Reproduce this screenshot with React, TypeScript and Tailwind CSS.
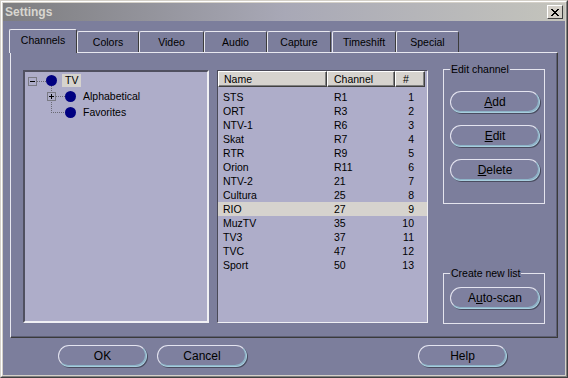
import React from 'react';

function Btn({ children, className }: { children: React.ReactNode; className: string }) {
  return (
    <div
      className={
        'flex items-center justify-center h-[22px] rounded-[11px] border border-[#e4e4f0] border-r-[#a8cede] border-b-[#a8cede] bg-[#7e809f] shadow-[1px_1px_0_#4a4c60,inset_-1px_-1px_0_#8db4c8] text-[12px] leading-none text-black ' +
        className
      }
    >
      {children}
    </div>
  );
}

const tabs: { label: string; cls: string; active?: boolean }[] = [
  { label: 'Channels', cls: 'w-[68px]', active: true },
  { label: 'Colors', cls: 'w-[62px]' },
  { label: 'Video', cls: 'w-[65px]' },
  { label: 'Audio', cls: 'w-[63px]' },
  { label: 'Capture', cls: 'w-[64px]' },
  { label: 'Timeshift', cls: 'w-[64px] ml-[1px]' },
  { label: 'Special', cls: 'w-[63px]' },
];

const rows = [
  ['STS', 'R1', '1'],
  ['ORT', 'R3', '2'],
  ['NTV-1', 'R6', '3'],
  ['Skat', 'R7', '4'],
  ['RTR', 'R9', '5'],
  ['Orion', 'R11', '6'],
  ['NTV-2', '21', '7'],
  ['Cultura', '25', '8'],
  ['RIO', '27', '9'],
  ['MuzTV', '35', '10'],
  ['TV3', '37', '11'],
  ['TVC', '47', '12'],
  ['Sport', '50', '13'],
];

export default function App() {
  return (
    <div className="w-[568px] h-[378px] border border-t-[#d4d0c8] border-l-[#d4d0c8] border-r-[#404040] border-b-[#404040] font-['Liberation_Sans',Arial,sans-serif] overflow-hidden">
      <div className="h-full border border-t-white border-l-white border-r-[#808080] border-b-[#808080] bg-[#d4d0c8] p-[1px] flex flex-col">
        {/* title bar */}
        <div className="h-[18px] shrink-0 flex items-start bg-linear-to-r from-[#7e7e80] via-[#a8a8b6] to-[#c4c4bc]">
          <span className="pl-[2px] pt-[2px] text-[12px] leading-[14px] font-bold text-[#d8d6d0]">Settings</span>
          <div className="ml-auto mr-[2px] mt-[2px] w-[16px] h-[14px] bg-[#d4d0c8] border border-t-white border-l-white border-r-[#404040] border-b-[#404040] flex items-center justify-center">
            <svg width="8" height="7" viewBox="0 0 8 7" shapeRendering="crispEdges">
              <path d="M0 0h2v1h-2zM6 0h2v1h-2zM1 1h2v1h-2zM5 1h2v1h-2zM2 2h4v1h-4zM3 3h2v1h-2zM2 4h4v1h-4zM1 5h2v1h-2zM5 5h2v1h-2zM0 6h2v1h-2zM6 6h2v1h-2z" fill="#000" />
            </svg>
          </div>
        </div>

        {/* content */}
        <div className="flex-1 bg-[#7c7e9c] pt-[8px] flex flex-col text-[10.5px] text-black">
          {/* tabs */}
          <div className="flex items-end h-[23px] ml-[6px]">
            {tabs.map((t) =>
              t.active ? (
                <div
                  key={t.label}
                  className={
                    'relative z-10 h-[24px] -mb-[1px] bg-[#7c7e9c] border-t border-l border-t-[#e8e8f0] border-l-[#e8e8f0] border-r border-r-[#3c3c3c] rounded-t-[2px] flex justify-center pt-[4px] leading-[13px] ' +
                    t.cls
                  }
                >
                  {t.label}
                </div>
              ) : (
                <div
                  key={t.label}
                  className={
                    'h-[21px] bg-[#7c7e9c] border-t border-l border-t-[#e8e8f0] border-l-[#e8e8f0] border-r border-r-[#3c3c3c] rounded-t-[2px] flex justify-center pt-[4px] leading-[13px] ' +
                    t.cls
                  }
                >
                  {t.label}
                </div>
              )
            )}
          </div>

          {/* tab panel */}
          <div className="ml-[7px] w-[548px] h-[286px] border border-t-[#e8e8f0] border-l-[#e8e8f0] border-r-[#3a3a3a] border-b-[#3a3a3a] shadow-[inset_-1px_-1px_0_#5c5e74] pl-[12px] pt-[17px] flex items-start">
            {/* tree */}
            <div className="w-[186px] h-[253px] border-2 border-t-[#505060] border-l-[#505060] border-r-[#f0f0f4] border-b-[#f0f0f4] bg-[#aeadc9] flex flex-col leading-[16px]">
              <div className="h-[16px] flex items-center pl-[3px]">
                <svg width="34" height="16" viewBox="0 0 34 16" shapeRendering="crispEdges" className="shrink-0">
                  <rect x="0.5" y="5.5" width="8" height="8" fill="none" stroke="#7a7a84" />
                  <path d="M2 9.5h5" stroke="#000" />
                  <path d="M9 9.5h9" stroke="#6a6a74" strokeDasharray="1 1" />
                  <path d="M23.5 14v2" stroke="#6a6a74" strokeDasharray="1 1" />
                  <circle cx="23.5" cy="8.5" r="5.5" fill="#000080" shapeRendering="auto" />
                </svg>
                <span className="bg-[#d6d3ce] px-[3px] h-[13px] leading-[13px]">TV</span>
              </div>
              <div className="h-[16px] flex items-center pl-[3px]">
                <svg width="55" height="16" viewBox="0 0 55 16" shapeRendering="crispEdges" className="shrink-0">
                  <path d="M23.5 0v16" stroke="#6a6a74" strokeDasharray="1 1" />
                  <rect x="19.5" y="4.5" width="8" height="8" fill="#aeadc9" stroke="#7a7a84" />
                  <path d="M21 8.5h5M23.5 6v5" stroke="#000" />
                  <path d="M28 8.5h9" stroke="#6a6a74" strokeDasharray="1 1" />
                  <circle cx="42.5" cy="8.5" r="5.5" fill="#000080" shapeRendering="auto" />
                </svg>
                <span>Alphabetical</span>
              </div>
              <div className="h-[16px] flex items-center pl-[3px]">
                <svg width="55" height="16" viewBox="0 0 55 16" shapeRendering="crispEdges" className="shrink-0">
                  <path d="M23.5 0v8.5h13" stroke="#6a6a74" strokeDasharray="1 1" fill="none" />
                  <circle cx="42.5" cy="8.5" r="5.5" fill="#000080" shapeRendering="auto" />
                </svg>
                <span>Favorites</span>
              </div>
            </div>

            {/* list */}
            <div className="ml-[8px] w-[211px] h-[253px] border border-t-[#4a4a58] border-l-[#4a4a58] border-r-[#f0f0f4] border-b-[#f0f0f4] bg-[#aeadc9] flex flex-col">
              <div className="flex h-[16px] leading-[14px]">
                <div className="w-[109px] bg-[#d6d3ce] border border-t-white border-l-white border-r-[#404040] border-b-[#404040] shadow-[inset_-1px_-1px_0_#808080] pl-[5px]">Name</div>
                <div className="w-[68px] bg-[#d6d3ce] border border-t-white border-l-white border-r-[#404040] border-b-[#404040] shadow-[inset_-1px_-1px_0_#808080] pl-[6px]">Channel</div>
                <div className="w-[30px] bg-[#d6d3ce] border border-t-white border-l-white border-r-[#404040] border-b-[#404040] shadow-[inset_-1px_-1px_0_#808080] pl-[7px]">#</div>
              </div>
              <div className="mt-[3px] flex flex-col">
                {rows.map((r) => (
                  <div
                    key={r[0]}
                    className={
                      r[0] === 'RIO'
                        ? 'flex h-[14px] leading-[14px] bg-[#d6d3ce]'
                        : 'flex h-[14px] leading-[14px]'
                    }
                  >
                    <div className="w-[109px] pl-[5px]">{r[0]}</div>
                    <div className="w-[68px] pl-[7px]">{r[1]}</div>
                    <div className="w-[30px] text-right pr-[11px]">{r[2]}</div>
                  </div>
                ))}
              </div>
            </div>

            {/* right column */}
            <div className="ml-[15px] flex flex-col -mt-[1px]">
              <div className="relative w-[102px] h-[135px] border border-[#e4e4ee] pl-[6px] pt-[21px] flex flex-col gap-[12px]">
                <span className="absolute left-[6px] -top-[8px] px-[1px] bg-[#7c7e9c] leading-[14px]">Edit channel</span>
                <Btn className="w-[90px]">
                  <span className="underline">A</span>dd
                </Btn>
                <Btn className="w-[90px]">
                  <span className="underline">E</span>dit
                </Btn>
                <Btn className="w-[90px]">
                  <span className="underline">D</span>elete
                </Btn>
              </div>
              <div className="relative mt-[69px] w-[102px] h-[51px] border border-[#e4e4ee] pl-[6px] pt-[13px]">
                <span className="absolute left-[6px] -top-[8px] px-[1px] bg-[#7c7e9c] leading-[14px]">Create new list</span>
                <Btn className="w-[90px]">
                  A<span className="underline">u</span>to-scan
                </Btn>
              </div>
            </div>
          </div>

          {/* bottom buttons */}
          <div className="flex mt-[7px] ml-[55px]">
            <Btn className="w-[89px]">OK</Btn>
            <Btn className="w-[90px] ml-[10px]">Cancel</Btn>
            <Btn className="w-[89px] ml-[171px]">Help</Btn>
          </div>
        </div>
      </div>
    </div>
  );
}
